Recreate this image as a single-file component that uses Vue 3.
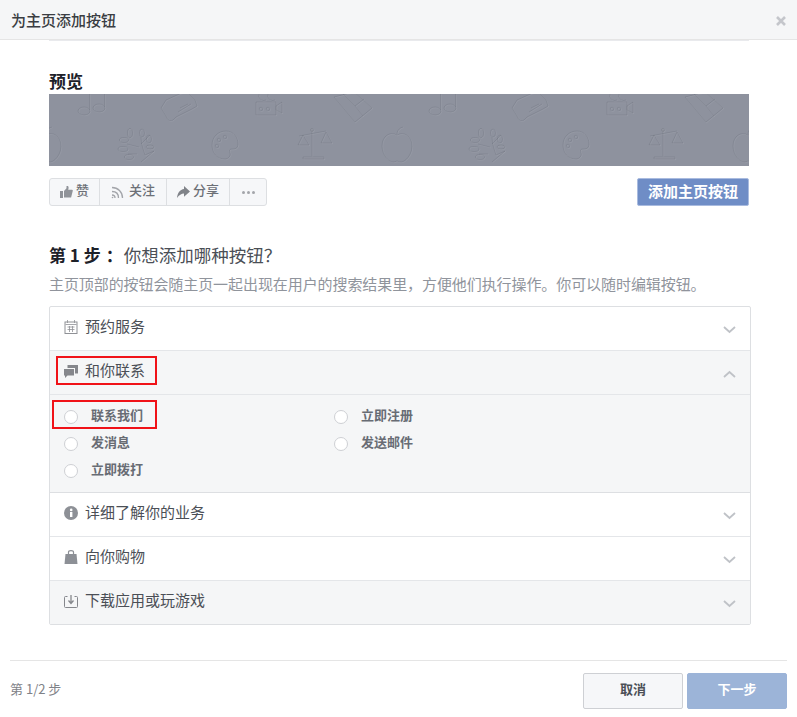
<script setup>
const rows = [
  { id: 'book', label: '预约服务', tint: false },
  { id: 'chat', label: '和你联系', tint: true, open: true },
  { id: 'info', label: '详细了解你的业务', tint: false },
  { id: 'bag', label: '向你购物', tint: false },
  { id: 'down', label: '下载应用或玩游戏', tint: true }
]
const options = ['联系我们', '立即注册', '发消息', '发送邮件', '立即拨打']
</script>

<template>
  <div class="dialog">
    <header class="head">
      <h1>为主页添加按钮</h1>
      <svg class="close" width="12" height="12" viewBox="0 0 12 12"><path d="M2 2l8 8M10 2l-8 8" stroke="#c4c6cb" stroke-width="2.6" fill="none"/></svg>
    </header>

    <main class="body">
      <div class="topline"></div>
      <h2 class="preview-title">预览</h2>
      <div class="banner">
        <svg width="700" height="72" viewBox="0 0 700 72">
          <defs>
            <g id="apple">
              <path d="M0 8C-7 4-15 9-15 19c0 9 7 16 11 16 2 0 3-1 4-1s2 1 4 1c4 0 11-7 11-16C15 9 7 4 0 8zM0 7c0-3 2-6 6-7" />
            </g>
            <g id="art">
              <!-- notes -->
              <ellipse cx="35" cy="17" rx="6" ry="4" /><ellipse cx="50" cy="14" rx="6" ry="4" />
              <path d="M40.500 16V0M55.500 13V0" />
              <!-- car -->
              <path d="M117 6l20-9 9 9 2 6-5 3-16 8-3 3a4 4 0 0 1-6-2l-1-2-5-8zM129 18l13-8M131 14l8-4" />
              <!-- camera -->
              <path d="M207 8h20v13h-20zM227 12l6-4v11l-6-3zM210 0a5 5 0 0 0 7 6M219 0a5 5 0 0 0 7 6" />
              <circle cx="212" cy="15" r="1.800" /><circle cx="219" cy="15" r="1.800" />
              <!-- book -->
              <path d="M285 3l21 25 17-14L305-2zM294 0l12 12 9-7M306 12l8 10" />
              <!-- apple -->
              <use href="#apple" x="-3" y="33" />
              <use href="#apple" x="348" y="33" />
              <!-- tree -->
              <path d="M92 68l13-11-9 4c-2-6-4-12-4-18M90 53l-12-3M92 50l9-9M88 60l-9 0" />
              <ellipse cx="81" cy="39" rx="2.500" ry="4.500" /><ellipse cx="93" cy="39" rx="2.500" ry="4" /><ellipse cx="75" cy="46" rx="4.500" ry="2.500" /><ellipse cx="100" cy="45" rx="2.500" ry="4" /><ellipse cx="74" cy="55" rx="5" ry="2.500" /><ellipse cx="80" cy="63" rx="4.500" ry="2.500" /><ellipse cx="101" cy="53" rx="4" ry="2" />
              <!-- palette -->
              <path d="M177 37c8 0 12 7 12 13 0 5-4 5-6 5-3 0-3 2-2 4 1 3-2 6-5 6-8 0-13-6-13-14s6-14 14-14z" />
              <circle cx="176" cy="43" r="1.800" /><circle cx="170" cy="46" r="1.800" /><circle cx="168" cy="52" r="1.800" />
              <!-- scale -->
              <path d="M263 36v26M250 42l27-5M254 63h21v2h-21zM254 41l-5 10h11zM277 38l-5 11h11z" />
              <circle cx="263" cy="36" r="1.500" />
            </g>
            <pattern id="tile" x="0" y="0" width="351" height="72" patternUnits="userSpaceOnUse">
              <use href="#art" class="lit" transform="translate(0.700 0.700)" />
              <use href="#art" class="shade" />
            </pattern>
          </defs>
          <rect width="700" height="72" fill="#8e929e" />
          <rect width="700" height="72" fill="url(#tile)" />
        </svg>
      </div>

      <div class="actions">
        <div class="group">
          <span class="seg seg-like">
            <svg width="13" height="12" viewBox="0 0 13 12"><path fill="#909399" d="M0 5h3v7H0zM4 5l2.500-2.800V0h1.300c1 .6 1 2 .4 3.800H12c.9 0 1 1 .6 1.600l-1.500 6H4z"/></svg>
            <em>赞</em>
          </span>
          <span class="seg seg-follow">
            <svg width="13" height="13" viewBox="0 0 13 13" fill="none" stroke="#a3a5aa" stroke-width="1.300"><path d="M1 1.500c6 0 10.500 4.500 10.500 10.500M1 5.500c4 0 6.500 2.500 6.500 6.500M1 9c1.800 0 3 1.200 3 3"/><circle cx="1.500" cy="11.500" r=".8" fill="#a3a5aa" stroke="none"/></svg>
            <em>关注</em>
          </span>
          <span class="seg seg-share">
            <svg width="13" height="12" viewBox="0 0 13 12"><path fill="#808389" d="M7 0l6 5.500-6 5.300V7.500C4.500 7.500 2 9 0 12c.5-5 3-8.500 7-9z"/></svg>
            <em>分享</em>
          </span>
          <span class="seg seg-more">
            <i></i><i></i><i></i>
          </span>
        </div>
        <button class="add" type="button">添加主页按钮</button>
      </div>

      <h3 class="step"><b>第 1 步<span class="colon">：</span></b>你想添加哪种按钮？</h3>
      <p class="desc">主页顶部的按钮会随主页一起出现在用户的搜索结果里，方便他们执行操作。你可以随时编辑按钮。</p>

      <section class="accordion">
        <template v-for="(row, i) in rows" :key="row.id">
          <div class="row" :class="{ tint: row.tint, last: i === rows.length - 1 }">
            <svg v-if="row.id === 'book'" width="13" height="14" viewBox="0 0 13 14" fill="none" stroke="#8f9196"><rect x=".5" y="2" width="12" height="11.500"/><path d="M3 0v3M10 0v3M1 4.500h11M3 7h7M3 9.500h7M5 6v6M8 6v6" stroke-width=".8"/></svg>
            <svg v-else-if="row.id === 'chat'" width="14" height="13" viewBox="0 0 14 13"><path fill="#85878c" d="M3.500 0h10.500v8.500h-3V3H3.500z"/><path fill="#85878c" d="M0 4h10v6.500H3.500L1 13v-2.500H0z"/></svg>
            <svg v-else-if="row.id === 'info'" width="14" height="14" viewBox="0 0 14 14"><circle cx="7" cy="7" r="7" fill="#8d9096"/><rect x="6" y="6" width="2.400" height="5" fill="#fff"/><circle cx="7.200" cy="3.900" r="1.300" fill="#fff"/></svg>
            <svg v-else-if="row.id === 'bag'" width="13" height="14" viewBox="0 0 13 14"><path fill="#8d9096" d="M1 4h11l1 10H0z"/><path fill="none" stroke="#8d9096" stroke-width="1.200" d="M4 4V2c0-1 1-1.400 2.500-1.400S9 1 9 2v2"/></svg>
            <svg v-else width="14" height="14" viewBox="0 0 14 14" fill="none" stroke="#85878c"><path d="M3.500 2.500H1.500a1 1 0 0 0-1 1v9a1 1 0 0 0 1 1h11a1 1 0 0 0 1-1v-9a1 1 0 0 0-1-1h-2"/><path d="M7 1v8M4.500 6.500L7 9.500l2.500-3" stroke-width="1.300"/></svg>
            <span class="label">{{ row.label }}</span>
            <svg class="chev" width="13" height="8" viewBox="0 0 13 8" fill="none" stroke="#bfc2c7" stroke-width="1.800">
              <path :d="row.open ? 'M1 7l5.500-5L12 7' : 'M1 1l5.500 5L12 1'"/>
            </svg>
          </div>
          <div v-if="row.open" class="panel">
            <label v-for="opt in options" :key="opt" class="opt"><i class="radio"></i><span class="opt-text">{{ opt }}</span></label>
          </div>
        </template>
        <div class="mark mark-a"></div>
        <div class="mark mark-b"></div>
      </section>
    </main>

    <footer class="foot">
      <span class="count">第 1/2 步</span>
      <div class="foot-btns">
        <button class="cancel" type="button">取消</button>
        <button class="next" type="button">下一步</button>
      </div>
    </footer>
  </div>
</template>

<style scoped>
.dialog {
  width: 797px;
  height: 717px;
  overflow: hidden;
  background: #fff;
  font-family: "Noto Sans CJK SC", "Liberation Sans", sans-serif;
  color: #1d2129;
  box-sizing: border-box;
}
.head {
  height: 39px;
  background: #f5f6f7;
  border-bottom: 1px solid #e5e5e5;
  display: flex;
  align-items: center;
  justify-content: space-between;
  padding: 0 10px 0 11px;
}
.head h1 {
  margin: 0;
  font-size: 15px;
  font-weight: 500;
  color: #3a3d42;
}
.close { margin-top: 2px; }
.body {
  padding: 0 48px 0 49px;
}
.topline {
  height: 1px;
  background: #e9eaed;
}
.preview-title {
  margin: 29px 0 0;
  height: 24px;
  line-height: 22px;
  font-size: 17px;
  font-weight: 700;
  color: #1d2129;
}
.banner {
  height: 72px;
  width: 700px;
}
.banner svg { display: block; }
.shade {
  fill: none;
  stroke: rgb(60, 65, 80);
  stroke-opacity: 0.15;
  stroke-width: 1;
}
.lit {
  fill: none;
  stroke: rgb(255, 255, 255);
  stroke-opacity: 0.06;
  stroke-width: 1;
}
.actions {
  margin-top: 12px;
  width: 700px;
  height: 28px;
  display: flex;
  justify-content: space-between;
}
.group {
  display: flex;
  height: 28px;
  box-sizing: border-box;
  background: #f6f7f9;
  border: 1px solid #dddfe2;
  border-radius: 3px;
}
.seg {
  display: flex;
  align-items: center;
  justify-content: center;
  gap: 3px;
  box-sizing: border-box;
  font-size: 13px;
  color: #6d7077;
  font-weight: 500;
  border-right: 1px solid #dddfe2;
}
.seg em {
  font-style: normal;
  padding-bottom: 6px;
}
.seg-like { width: 50px; }
.seg-follow { width: 67px; gap: 5px; }
.seg-share { width: 63px; }
.seg-more { width: 36px; border-right: 0; gap: 2px; }
.seg-more i {
  width: 3px;
  height: 3px;
  border-radius: 50%;
  background: #a3a5aa;
}
.add {
  width: 112px;
  height: 28px;
  padding: 0 0 3px;
  box-sizing: border-box;
  background: #6f8dc6;
  border: 1px solid #a9bbdf;
  border-radius: 2px;
  color: #fff;
  font: 700 15px "Noto Sans CJK SC", sans-serif;
}
.step {
  margin: 38px 0 0;
  height: 24px;
  line-height: 22px;
  font-size: 17.5px;
  font-weight: 400;
  color: #4b4f56;
}
.step b {
  color: #1d2129;
  font-size: 17px;
  font-weight: 700;
  margin-right: 1px;
}
.colon {
  margin-left: 5px;
}
.desc {
  margin: 7px 0 0;
  height: 20px;
  line-height: 18px;
  font-size: 15px;
  color: #90949c;
  white-space: nowrap;
  letter-spacing: -0.08px;
}
.accordion {
  position: relative;
  margin-top: 11px;
  width: 702px;
  box-sizing: border-box;
  border: 1px solid #dddfe2;
  border-radius: 2px;
}
.row {
  display: flex;
  align-items: center;
  padding: 0 14px 3px;
  height: 40px;
  border-bottom: 1px solid #e4e6e9;
}
.row.last { border-bottom: 0; }
.row.tint, .panel { background: #f5f6f7; }
.label {
  margin-left: 7px;
  padding-bottom: 4px;
  font-size: 15px;
  color: #4b4f56;
}
.row > svg:first-child { width: 14px; flex: none; }
.chev { margin-left: auto; margin-top: 6px; }
.panel {
  display: grid;
  grid-template-columns: 270px 1fr;
  grid-auto-rows: 27px;
  padding: 8px 14px;
  border-bottom: 1px solid #dddfe2;
}
.opt {
  display: flex;
  align-items: center;
  gap: 13px;
  font-size: 13px;
  font-weight: 700;
  color: #686c74;
}
.opt-text { padding-bottom: 5px; }
.radio {
  width: 14px;
  height: 14px;
  box-sizing: border-box;
  border-radius: 50%;
  background: #fff;
  border: 1px solid #ced0d4;
  flex: none;
}
.mark {
  position: absolute;
  box-sizing: border-box;
  border: 2px solid #f01218;
}
.mark-a { left: 6px; top: 49px; width: 101px; height: 29px; }
.mark-b { left: 2px; top: 93px; width: 105px; height: 29px; }
.foot {
  margin: 35px 10px 0;
  border-top: 1px solid #e5e5e5;
  padding-top: 12px;
  display: flex;
  align-items: center;
  justify-content: space-between;
}
.count {
  font-size: 13px;
  color: #7f8288;
  padding-bottom: 6px;
}
.foot-btns {
  display: flex;
  gap: 4px;
}
.foot-btns button {
  width: 100px;
  height: 36px;
  padding: 0 0 6px;
  box-sizing: border-box;
  border-radius: 2px;
  font: 700 13px "Noto Sans CJK SC", sans-serif;
}
.cancel {
  background: #f6f7f9;
  border: 1px solid #ced0d4;
  color: #4b4f56;
}
.next {
  background: #9cb4d8;
  border: 1px solid #9cb4d8;
  color: #fff;
}
</style>
